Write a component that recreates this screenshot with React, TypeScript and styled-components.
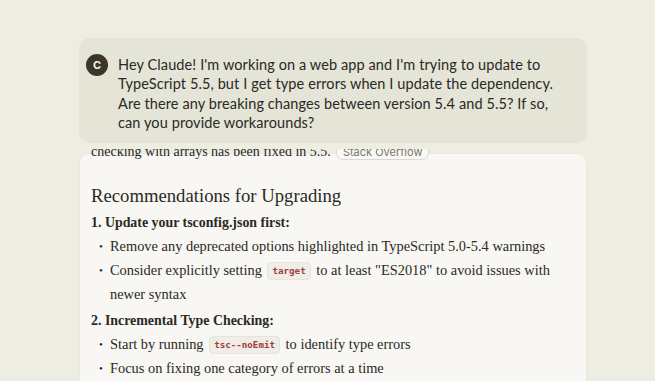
import React from 'react'
import styled, { createGlobalStyle } from 'styled-components'

const ink = '#2a2925'
const pageBg = '#edede1'
const userBg = '#e4e4d7'
const cardBg = '#f8f7f3'
const codeRed = '#9e403c'

const GlobalStyle = createGlobalStyle`
  html, body {
    margin: 0;
    padding: 0;
    background: ${pageBg};
    height: 100%;
    overflow: hidden;
  }
  #root {
    height: 100%;
  }
`

const Page = styled.div`
  height: 381px;
  padding: 38px 0 0 79px;
  box-sizing: border-box;
  display: flex;
  flex-direction: column;
`

const Column = styled.div`
  width: 508px;
  display: flex;
  flex-direction: column;
  flex: 1;
  min-height: 0;
`

const UserCard = styled.div`
  background: ${userBg};
  border-radius: 11px;
  padding: 16px 14px 10px 7px;
  display: flex;
  gap: 10px;
  align-items: flex-start;
`

const Avatar = styled.div`
  flex: none;
  width: 22px;
  height: 22px;
  border-radius: 50%;
  background: #3b3629;
  color: #f4f1e8;
  font-family: 'Inter', 'Noto Sans', sans-serif;
  font-weight: 700;
  font-size: 11px;
  display: flex;
  align-items: center;
  justify-content: center;
`

const UserText = styled.p`
  margin: 1px 0 0;
  font-family: 'Lato', 'Noto Sans', sans-serif;
  font-size: 14.5px;
  line-height: 19.4px;
  color: ${ink};
  letter-spacing: 0.1px;
`

const Viewport = styled.div`
  margin-top: 6px;
  flex: 1;
  min-height: 0;
  overflow: hidden;
`

const ResponseCard = styled.div`
  margin-top: 4px;
  background: ${cardBg};
  border: 1px solid #e9e7df;
  border-bottom: none;
  border-radius: 10px 10px 0 0;
  padding: 0 12px 20px 11px;
  height: 100%;
  box-sizing: border-box;
  font-family: 'Liberation Serif', 'DejaVu Serif', serif;
  color: ${ink};
`

const ClippedLine = styled.p`
  margin: -12px 0 0;
  font-size: 14px;
  line-height: 20px;
  display: flex;
  align-items: center;
  gap: 5px;
`

const SourcePill = styled.span`
  font-family: 'Inter', 'Noto Sans', sans-serif;
  font-size: 11px;
  line-height: 14px;
  color: #77756d;
  border: 1px solid #dcd9d0;
  border-radius: 7px;
  padding: 0 6px;
  background: #f9f8f4;
`

const Heading = styled.h2`
  margin: 21px 0 0;
  font-size: 18.7px;
  line-height: 26px;
  font-weight: 400;
`

const StepTitle = styled.p<{ $first?: boolean }>`
  margin: ${({ $first }) => ($first ? '2px' : '3px')} 0 0;
  font-size: 13.9px;
  line-height: 24px;
  font-weight: 700;
`

const BulletList = styled.ul`
  list-style: none;
  margin: -1px 0 0;
  padding: 0 0 0 8px;
`

const Bullet = styled.li`
  position: relative;
  padding-left: 11px;
  font-size: 14.4px;
  line-height: 24px;

  &:before {
    content: '•';
    position: absolute;
    left: 0;
    top: 0;
    font-size: 11px;
  }
`

const Code = styled.code`
  display: inline-block;
  font-family: 'DejaVu Sans Mono', 'Liberation Mono', monospace;
  font-size: 9.2px;
  font-weight: 600;
  line-height: 10px;
  color: ${codeRed};
  background: #efede6;
  border: 1px solid #e7e4db;
  border-radius: 4px;
  padding: 3px 4px;
  margin: 0 2px;
  vertical-align: 1px;
`

const App: React.FunctionComponent = () => {
  return (
    <>
      <GlobalStyle />
      <Page>
        <Column>
          <UserCard>
            <Avatar>C</Avatar>
            <UserText>
              Hey Claude! I'm working on a web app and I'm trying to update to TypeScript 5.5, but I get type
              errors when I update the dependency. Are there any breaking changes between version 5.4 and 5.5?
              If so, can you provide workarounds?
            </UserText>
          </UserCard>
          <Viewport>
            <ResponseCard>
              <ClippedLine>
                checking with arrays has been fixed in 5.5.
                <SourcePill>Stack Overflow</SourcePill>
              </ClippedLine>
              <Heading>Recommendations for Upgrading</Heading>
              <StepTitle $first>1. Update your tsconfig.json first:</StepTitle>
              <BulletList>
                <Bullet>Remove any deprecated options highlighted in TypeScript 5.0-5.4 warnings</Bullet>
                <Bullet>
                  Consider explicitly setting <Code>target</Code> to at least "ES2018" to avoid issues with newer
                  syntax
                </Bullet>
              </BulletList>
              <StepTitle>2. Incremental Type Checking:</StepTitle>
              <BulletList>
                <Bullet>
                  Start by running <Code>tsc--noEmit</Code> to identify type errors
                </Bullet>
                <Bullet>Focus on fixing one category of errors at a time</Bullet>
              </BulletList>
            </ResponseCard>
          </Viewport>
        </Column>
      </Page>
    </>
  )
}

export default App
